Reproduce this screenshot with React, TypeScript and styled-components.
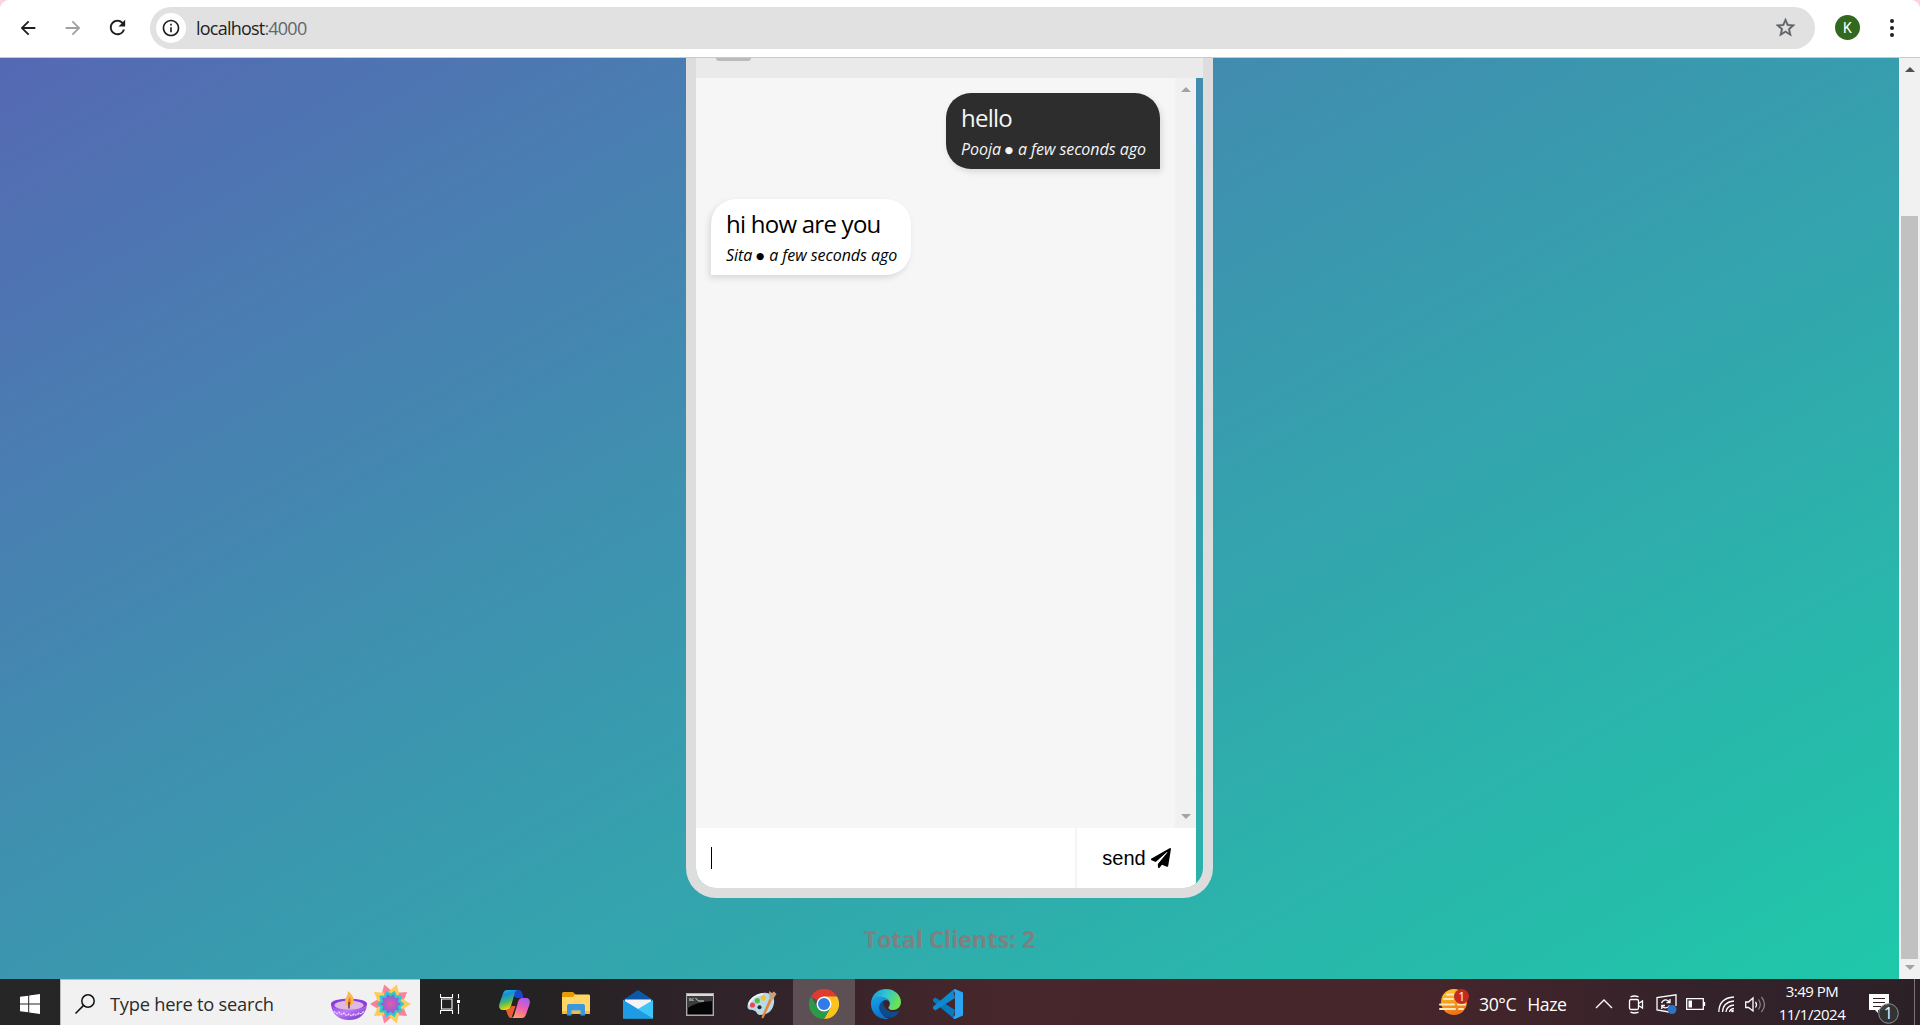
import React from "react";
import styled, { createGlobalStyle, css } from "styled-components";
import { MdArrowBack, MdArrowForward, MdRefresh, MdInfoOutline, MdStarBorder } from "react-icons/md";
import { FaPaperPlane } from "react-icons/fa";

const GlobalStyle = createGlobalStyle`
  * { box-sizing: border-box; }
  html, body { margin: 0; padding: 0; overflow: hidden; }
  body { font-family: "Open Sans", "Noto Sans", sans-serif; }
  svg { display: block; flex: none; }
`;

const ui = css`
  font-family: "Open Sans", "Noto Sans", sans-serif;
  white-space: nowrap;
`;

const Screen = styled.div`
  width: 1920px;
  height: 1025px;
  display: flex;
  flex-direction: column;
  overflow: hidden;
  background: #fbd3e0;
`;

/* Browser toolbar */
const Toolbar = styled.header`
  height: 58px;
  flex: none;
  display: flex;
  align-items: center;
  padding: 0 16px 2px 5px;
  background: #fff;
  border-bottom: 1px solid #c9cbca;
  border-radius: 9px 9px 0 0;
`;

const NavButton = styled.span<{ $dim?: boolean }>`
  width: 45px;
  height: 45px;
  display: flex;
  align-items: center;
  justify-content: center;
  color: ${(p) => (p.$dim ? "#a0a0a0" : "#1f1f1f")};
`;

const AddressBar = styled.div`
  width: 1665px;
  height: 42px;
  margin-left: 10px;
  padding: 0 18px 0 6px;
  display: flex;
  align-items: center;
  border-radius: 21px;
  background: #e1e1e1;
`;

const InfoBadge = styled.span`
  width: 30px;
  height: 30px;
  border-radius: 50%;
  background: #fff;
  display: flex;
  align-items: center;
  justify-content: center;
  color: #1f1f1f;
`;

const Url = styled.span`
  ${ui}
  flex: 1;
  margin-left: 10px;
  padding-top: 1px;
  font-size: 18px;
  letter-spacing: -0.78px;
  color: #1f1f1f;
  span { color: #63666a; }
`;

const Bookmark = styled(MdStarBorder)`
  color: #5f6368;
  path:not([fill="none"]) {
    stroke: #5f6368;
    stroke-width: 0.4px;
  }
`;

const Avatar = styled.span`
  width: 25px;
  height: 25px;
  margin-left: 20px;
  border-radius: 50%;
  background: #33691e;
  color: #fff;
  font: 14px Roboto, sans-serif;
  display: flex;
  align-items: center;
  justify-content: center;
`;

const MenuDots = styled.span`
  margin-left: 30px;
  width: 4px;
  display: flex;
  flex-direction: column;
  align-items: center;
  gap: 3px;
  i { width: 4px; height: 4px; border-radius: 50%; background: #1f1f1f; }
`;

/* Page */
const Viewport = styled.div`
  height: 921px;
  flex: none;
  display: flex;
  overflow: hidden;
`;

const Page = styled.main`
  width: 1899px;
  display: flex;
  flex-direction: column;
  align-items: center;
  background: linear-gradient(to bottom right, #5a60b4, #3c95af 49%, #1fc8a9) 0 100% / 1899px 1091px no-repeat;
`;

const Phone = styled.section`
  width: 527px;
  height: 840px;
  border: 10px solid #ddd;
  border-top: 0;
  border-radius: 0 0 30px 30px;
  overflow: hidden;
  display: flex;
  flex-direction: column;
`;

const ChatHeader = styled.div`
  height: 20px;
  padding-left: 20px;
  background: #eaeaea;
`;

const HeaderInputEdge = styled.div`
  width: 35px;
  height: 3px;
  border-radius: 0 0 4px 4px;
  background: #bbb;
`;

const ChatBody = styled.div`
  width: 500px;
  height: 750px;
  display: flex;
  background: #f6f6f6;
`;

const Messages = styled.div`
  flex: 1;
  padding: 15px;
  display: flex;
  flex-direction: column;
  gap: 30px;
`;

const Bubble = styled.article<{ $own?: boolean }>`
  align-self: ${(p) => (p.$own ? "flex-end" : "flex-start")};
  width: ${(p) => (p.$own ? 214 : 200)}px;
  height: 76px;
  padding: 6px 0 0 15px;
  color: ${(p) => (p.$own ? "#f5f5f5" : "#000")};
  background: ${(p) => (p.$own ? "#2d2d2d" : "#fff")};
  border-radius: ${(p) => (p.$own ? "25px 25px 0 25px" : "25px 25px 25px 0")};
  box-shadow: ${(p) => (p.$own ? 2 : -2)}px 3px 6px rgba(0, 0, 0, 0.12);
`;

const BubbleText = styled.p`
  ${ui}
  margin: 0;
  height: 38px;
  font-size: 24px;
  line-height: 37px;
  letter-spacing: -0.75px;
`;

const Meta = styled.p`
  ${ui}
  margin: 0;
  height: 24px;
  display: flex;
  align-items: center;
  font-size: 16px;
  font-style: italic;
  line-height: 24px;
  letter-spacing: -0.05px;
`;

const Dot = styled.span`
  width: 17px;
  padding-right: 1px;
  text-align: center;
  font: normal 9.5px/25px "DejaVu Sans", sans-serif;
`;

const ScrollTrack = styled.div<{ $bg: string }>`
  width: 21px;
  flex: none;
  display: flex;
  flex-direction: column;
  align-items: center;
  background: ${(p) => p.$bg};
`;

const Arrow = styled.span<{ $down?: boolean; $color: string }>`
  width: 0;
  height: 0;
  flex: none;
  margin: ${(p) => (p.$down ? "auto 0 9px" : "9px 0 0")};
  border: 5px solid transparent;
  ${(p) =>
    p.$down
      ? `border-top-color: ${p.$color}; border-bottom: 0;`
      : `border-bottom-color: ${p.$color}; border-top: 0;`}
`;

const Thumb = styled.div`
  width: 17px;
  height: 743px;
  margin-top: 144px;
  background: #c1c1c1;
`;

const Composer = styled.div`
  width: 500px;
  height: 60px;
  display: flex;
  background: #fff;
`;

const TextField = styled.div`
  width: 381px;
  display: flex;
  align-items: center;
  padding-left: 15px;
  border-right: 2px solid #f5f5f5;
`;

const Caret = styled.i`
  width: 1px;
  height: 22px;
  background: #000;
`;

const SendButton = styled.button`
  flex: 1;
  border: 0;
  padding: 0;
  background: none;
  color: #000;
  display: flex;
  align-items: center;
  justify-content: center;
  gap: 5px;
  font: 20px "Liberation Sans", Arial, sans-serif;
`;

const TotalClients = styled.h3`
  ${ui}
  margin: 24px 0 0;
  font-size: 23.4px;
  line-height: 34px;
  font-weight: 700;
  color: #808080;
`;

/* Taskbar */
const Taskbar = styled.footer`
  height: 46px;
  flex: none;
  display: flex;
  color: #fff;
  background: linear-gradient(90deg, #272626 0, #232223 500px, #33232a 780px, #47272b 1000px, #47262b 1400px, #34222a 1700px, #2c2027 1920px);
`;

const Slot = styled.span<{ $w: number; $active?: boolean; $top?: number }>`
  width: ${(p) => p.$w}px;
  height: 46px;
  flex: none;
  display: flex;
  align-items: center;
  justify-content: center;
  padding-top: ${(p) => p.$top ?? 4}px;
  background: ${(p) => (p.$active ? "#5d5054" : "transparent")};
`;

const Glyph = styled.span<{ $top: number }>`
  flex: none;
  margin-top: ${(p) => p.$top}px;
`;

const Search = styled.div`
  width: 360px;
  flex: none;
  display: flex;
  align-items: flex-start;
  padding: 0 8px 0 14px;
  background: #f1f1f1;
  border: 1px solid #bdbdbd;
  border-bottom: 0;
  border-right: 0;
`;

const SearchText = styled.span`
  ${ui}
  flex: 1;
  margin: 9px 0 0 15px;
  font-size: 18.3px;
  line-height: 30px;
  letter-spacing: -0.24px;
  color: #2b2b2b;
`;

const Festive = styled.span`
  display: flex;
  align-items: flex-start;
  gap: 3px;
  margin-right: 1px;
`;

const Weather = styled.div`
  ${ui}
  width: 138px;
  flex: none;
  margin-left: 460px;
  display: flex;
  gap: 9px;
  font-size: 17.7px;
  line-height: 50px;
  letter-spacing: -0.45px;
  span + span + span { margin-left: 2px; }
`;

const Tray = styled.div`
  display: flex;
  margin-left: 11px;
`;

const Clock = styled.div`
  ${ui}
  width: 84px;
  flex: none;
  padding-top: 1px;
  text-align: center;
  font-size: 15px;
  line-height: 23px;
  letter-spacing: -0.5px;
`;

const ShowDesktop = styled.span`
  width: 6px;
  margin-left: auto;
  border-left: 1px solid #7b7377;
`;

const Start = () => (
  <svg width="20" height="20" viewBox="0 0 20 20" fill="#fff">
    <path d="M0 2.8 8.2 1.7V9.5H0zM9.2 1.5 20 0V9.5H9.2zM0 10.5H8.2V18.3L0 17.2zM9.2 10.5H20V20L9.2 18.5z" />
  </svg>
);

const Lens = () => (
  <svg width="20" height="20" viewBox="0 0 20 20" fill="none" stroke="#111" strokeWidth="1.5">
    <circle cx="13" cy="7" r="6.2" />
    <path d="M8.6 11.4 .5 19.5" />
  </svg>
);

const Diya = () => (
  <svg width="36" height="30" viewBox="0 0 36 30">
    <defs>
      <linearGradient id="bowl" x2="1" y2="1">
        <stop stopColor="#8a3fe0" />
        <stop offset=".45" stopColor="#bb7cf5" />
        <stop offset="1" stopColor="#7023c4" />
      </linearGradient>
    </defs>
    <path d="M0 12C0 20 5 29 18 29S36 20 36 12Z" fill="url(#bowl)" />
    <ellipse cx="18" cy="13" rx="18" ry="5.500" fill="#8b3edb" />
    <ellipse cx="18" cy="14.300" rx="14.500" ry="4.500" fill="#ddb9e4" />
    <path d="M3 20q2.500 4 5 1 2.500 4 5 1 2.500 4 5 1 2.500 3 5 0 2.500 2 5-1 2.500 2 5-2" fill="none" stroke="#f1d8ff" strokeWidth="1.300" strokeDasharray="2 .8" />
    <path d="M17 0c5 4 7 9 5 12.500-2 3.500-7 3-8-.5C13 8 17 6 17 0Z" fill="#f8b84e" />
    <path d="M18.500 6c2 3 2 6 .5 8-2 0-3-3-.5-8Z" fill="#ef7c31" />
    <path d="M18 11v6.500" stroke="#6d3a35" strokeWidth="1.500" />
  </svg>
);

const star = (n: number, outer: number, inner: number) =>
  Array.from({ length: n * 2 }, (_, i) => {
    const a = (Math.PI * i) / n;
    const r = i % 2 ? inner : outer;
    return `${(20.5 + r * Math.cos(a)).toFixed(1)},${(20.5 + r * Math.sin(a)).toFixed(1)}`;
  }).join(" ");

const wedge = (i: number) => {
  const a = (Math.PI * i) / 5;
  const pt = (r: number, t: number) => `${20.5 + r * Math.cos(t)},${20.5 + r * Math.sin(t)}`;
  return `${pt(20.5, a)} ${pt(13, a + 0.42)} ${pt(6, a)} ${pt(13, a - 0.42)}`;
};

const Rangoli = () => (
  <svg width="41" height="42" viewBox="0 0 41 41">
    <defs>
      <radialGradient id="core">
        <stop stopColor="#e25bae" />
        <stop offset="1" stopColor="#8060db" />
      </radialGradient>
    </defs>
    {[1, 3, 5, 7, 9].map((i) => <polygon key={i} points={wedge(i)} fill={i === 5 ? "#f98097" : "#fb8397"} />)}
    {[0, 2, 4, 6, 8].map((i) => <polygon key={i} points={wedge(i)} fill="#ffcb5a" />)}
    <polygon points={star(10, 14, 10.5)} fill="#28cbd0" />
    <polygon points={star(10, 10.5, 7.5)} fill="url(#core)" />
  </svg>
);

const TaskView = () => (
  <svg width="20" height="20" viewBox="0 0 20 20" fill="none" stroke="#fff" strokeWidth="1.1">
    <path d="M.5 0V3.500H12.500V0M.5 20V16.500H12.500V20M1.500 5V15H12V5zM18.500 0V4.500M18.500 10V20" />
    <path d="M17 6H20V9H17z" fill="#fff" stroke="none" />
  </svg>
);

const Copilot = () => (
  <svg width="31" height="28" viewBox="0 0 31 28">
    <defs>
      <linearGradient id="cpA" x2=".3" y2="1">
        <stop stopColor="#20c4f4" /><stop offset=".3" stopColor="#168edb" /><stop offset=".65" stopColor="#49b768" /><stop offset="1" stopColor="#f5d500" />
      </linearGradient>
      <linearGradient id="cpB" x1=".7" x2=".3" y2="1">
        <stop stopColor="#a55cf0" /><stop offset=".5" stopColor="#ef5fb0" /><stop offset="1" stopColor="#ffa05c" />
      </linearGradient>
    </defs>
    <path d="M15 0h4.500c2 0 3 1 3.700 3l1.300 5h-6c-3 0-4-3-5.500-5z" fill="#1746d1" />
    <path d="M8.500 0H19c-2 0-3 2-3.500 4l-3.500 12c-.7 2.500-2 4-4.500 4H3.500C.5 20-.5 17 .5 13.500L4 3.500C4.800 1 6.300 0 8.500 0Z" fill="url(#cpA)" />
    <path d="M7 20c2.500 0 4.500-1 5.500-4h4l-4 12c-2 0-3-1-3.800-3.300z" fill="#ef5a36" />
    <path d="M22.500 28H12c2 0 3-2 3.500-4L19 12c.7-2.500 2-4 4.500-4h4c3 0 4 3 3 6.500L27 24.500c-.8 2.500-2.300 3.500-4.500 3.500Z" fill="url(#cpB)" />
  </svg>
);

const Folder = () => (
  <svg width="28" height="24" viewBox="0 0 28 24">
    <path d="M0 1.500Q0 0 1.500 0H11l2.500 2.500V6H0z" fill="#e39c08" />
    <path d="M13 2.500H27Q28 2.500 28 4V22H0V5h11z" fill="#ffd667" />
    <path d="M0 19H28V22H0z" fill="#f5bb3b" />
    <path d="M5 23.500V14Q5 12 7 12H21Q23 12 23 14V23.500H18.500V18.500H9.500V23.500z" fill="#3b97dc" />
  </svg>
);

const Mail = () => (
  <svg width="30" height="29" viewBox="0 0 30 29">
    <path d="M0 10 15 0 30 10V16H0z" fill="#0d58a6" />
    <path d="M2 9.500H28V18L15 26 2 18z" fill="#f5f3f7" />
    <path d="M0 10 15 19 0 28.500z" fill="#2fb2ec" />
    <path d="M30 10V28.500H0L15 19z" fill="#3fc5f7" />
    <path d="M0 10 30 28.500H0z" fill="#1e9be5" />
  </svg>
);

const Terminal = () => (
  <svg width="28" height="23" viewBox="0 0 28 23">
    <path d="M.7.7H27.300V22.300H.7z" fill="#050505" stroke="#a8abad" strokeWidth="1.400" />
    <path d="M1 1H27V3H1z" fill="#d9dcdd" />
    <path d="M1.500 3H26.500V8Q10 9 1.500 15z" fill="#3d3d3d" />
    <path d="M4 5V8M6 5.500V8M7.500 5.500v.5M7.500 7.500V8M9.500 5l3 3H18" fill="none" stroke="#ddd" strokeWidth="1" />
  </svg>
);

const Paint = () => (
  <svg width="30" height="29" viewBox="0 0 30 29">
    <path d="M16 3C24 2 28 7 27 13c-1 8-7 12-14 12-3 0-3-3-5-4-3-2-7 0-7.500-4C0 10 8 4 16 3Z" fill="#b9d9e9" />
    <path d="M16 4C9 5 3 9 2 15" fill="none" stroke="#e5f5fb" strokeWidth="2" />
    <circle cx="5.500" cy="15" r="2.600" fill="#e84a4f" />
    <circle cx="10.300" cy="10.700" r="2.600" fill="#5bb84e" />
    <circle cx="16.300" cy="8" r="2.700" fill="#f4c430" />
    <circle cx="12.500" cy="17.200" r="2" fill="#1f2a34" />
    <path d="M22.500 8.500 25 10 16.500 28Q14 29 15 26z" fill="#e08a38" />
    <path d="M22.500 8.500 22 1 25 3 27 1.500 29.500 4 25.500 10z" fill="#c7a27a" />
  </svg>
);

const Chrome = () => (
  <svg width="30" height="30" viewBox="0 0 30 30">
    <path d="M15 15 2 7.500A15 15 0 0 1 28 7.500Z" fill="#e03b30" />
    <path d="M15 7.500H28A15 15 0 0 1 15 30L21.500 18.750Z" fill="#fcc31e" />
    <path d="M2 7.500 8.500 18.750Q12 23 17 22.300L21.500 18.750 15 30A15 15 0 0 1 2 7.500Z" fill="#2b9a48" />
    <circle cx="15" cy="15" r="7.500" fill="#fff" />
    <circle cx="15" cy="15" r="6" fill="#2f7bea" />
  </svg>
);

const Edge = () => (
  <svg width="30" height="30" viewBox="0 0 30 30">
    <defs>
      <linearGradient id="edA" x2="1" y2=".4"><stop stopColor="#1593dc" /><stop offset=".5" stopColor="#2fc4d2" /><stop offset="1" stopColor="#6be255" /></linearGradient>
      <linearGradient id="edB" y2="1" x2=".4"><stop stopColor="#1aa4e4" /><stop offset="1" stopColor="#0a6fce" /></linearGradient>
    </defs>
    <path d="M0 14C1 5 7 0 15 0c9 0 15 6.500 15 13 0 5-4 8-8 8-3.500 0-5.500-1.500-4.500-3C21 13 17 9 12 9 6 8 1 11 0 14Z" fill="url(#edA)" />
    <path d="M0 15C0 10 4 7.500 9 7.500c6 0 10 4 10 7.500 0-2-2-4-4-4-4 0-7 5-6 9 1 5 5 9 9 9.500Q16 30 15 30C6 30 0 23 0 15Z" fill="url(#edB)" />
    <path d="M12 12C7 15 7 21 11 25s10 5 14 1.500Q28 24 28.500 21.700q-.5-.5-2 .5c-4 2-11 0-12.500-4Q12 15 12 12Z" fill="#114a8b" />
    <path d="M12.300 13C14 11 19 12 18.500 15.500q0 1-1 2.500c-.7 1 0 2 1.500 2.500-4 0-7-4-6.700-7.500Z" fill="#3a252b" />
  </svg>
);

const Code = () => (
  <svg width="30" height="30" viewBox="0 0 30 30">
    <path d="M2.300 8.500 0 10.300v2L20 29l2-8z" fill="#0878bf" />
    <path d="M2.300 21.500 0 19.700v-2L20 1l2 8z" fill="#0f89d2" />
    <path d="M22 0 30 3.500V26.500L22 30Q20.500 30 20 28.500L22 26V4L20 1.500Q21 0 22 0Z" fill="#2ba4f2" />
  </svg>
);

const Haze = () => (
  <svg width="31" height="27" viewBox="0 0 31 27">
    <defs>
      <linearGradient id="sun" y2="1" x2=".3"><stop stopColor="#ffd02b" /><stop offset="1" stopColor="#f17318" /></linearGradient>
    </defs>
    <circle cx="15" cy="13" r="13" fill="url(#sun)" />
    <path d="M8 5.500H15M5 10H14M1 15.500H15M19 15.500H26M1 20H16M20 20H24" stroke="#ffe8ba" strokeWidth="2" strokeLinecap="round" />
    <circle cx="22.500" cy="7.500" r="7.500" fill="#c42b20" />
    <text x="22.500" y="12" fill="#fff" fontSize="12" textAnchor="middle" fontFamily="Open Sans, sans-serif">1</text>
  </svg>
);

const line = { fill: "none", stroke: "#fff", strokeWidth: 1.3 };

const Chevron = () => <svg width="18" height="10" viewBox="0 0 18 10" {...line}><path d="M1 9 9 1 17 9" /></svg>;
const Camera = () => (
  <svg width="16" height="19" viewBox="0 0 16 19" {...line}>
    <rect x="1.500" y="4.500" width="9" height="10" rx="1.500" />
    <path d="M10.500 8.500 14.500 6V13L10.500 10.500M2.500 1.800Q6.500 .2 10.500 1.800M2.500 17.200Q6.500 18.800 10.500 17.200" />
  </svg>
);
const Sync = () => (
  <svg width="21" height="20" viewBox="0 0 21 20" {...line}>
    <path d="M13 18 1 16V3.500L20 .8V12M5.500 9Q7 5.500 10 5.800 12 6 13.500 8M14 5V8.500H10.500M13.500 11.500Q12 14 9 13.800 7 13.500 6 12M5.800 15V11.500H9" />
    <circle cx="16" cy="15.500" r="4.500" fill="#2c74c4" stroke="none" />
  </svg>
);
const Battery = () => (
  <svg width="20" height="12" viewBox="0 0 20 12" {...line}>
    <path d="M.7.7H17.300V11.300H.7zM18.500 4V8" /><path d="M2.500 2.500H6V9.500H2.500z" fill="#fff" stroke="none" />
  </svg>
);
const Wifi = () => (
  <svg width="17" height="17" viewBox="0 0 17 17" {...line}>
    <path d="M.8 16Q1 2 16 1M4.500 16Q5 6 16 5M8 16Q8.500 10 16 9M11.500 16Q12 13 16 12.500" />
    <circle cx="14.500" cy="15" r="1.300" fill="#fff" stroke="none" />
  </svg>
);
const Volume = () => (
  <svg width="21" height="17" viewBox="0 0 21 17" {...line}>
    <path d="M.7 6H3.500L8 2V15L3.500 11.500H.7zM10.500 6Q12.500 8.500 10.500 11.500" />
    <path d="M13.500 3.500Q17 8.500 13.500 13.500M16.500 1Q22.500 8.500 16.500 16" stroke="#8b7f84" />
  </svg>
);
const Notice = () => (
  <svg width="31" height="31" viewBox="0 0 31 31">
    <path d="M0 0H20V16H9V19L6 16H0z" fill="#fff" />
    <path d="M4 4.500H16M4 8.500H16M4 12.500H12" stroke="#2d2027" strokeWidth="1.200" />
    <circle cx="19.500" cy="19.500" r="9.800" fill="#353535" fillOpacity=".93" stroke="#929292" strokeWidth="1" />
    <text x="19.500" y="25" fill="#fff" fontSize="15.500" textAnchor="middle" fontFamily="Open Sans, sans-serif">1</text>
  </svg>
);

const messages = [
  { text: "hello", author: "Pooja", own: true },
  { text: "hi how are you", author: "Sita", own: false },
];

const apps = [Copilot, Folder, Mail, Terminal, Paint, Chrome, Edge, Code];

export default function App() {
  return (
    <Screen>
      <GlobalStyle />
      <Toolbar>
        <NavButton><MdArrowBack size={22} /></NavButton>
        <NavButton $dim><MdArrowForward size={22} /></NavButton>
        <NavButton><MdRefresh size={23} /></NavButton>
        <AddressBar>
          <InfoBadge><MdInfoOutline size={20} /></InfoBadge>
          <Url>localhost<span>:4000</span></Url>
          <Bookmark size={23} />
        </AddressBar>
        <Avatar>K</Avatar>
        <MenuDots><i /><i /><i /></MenuDots>
      </Toolbar>

      <Viewport>
        <Page>
          <Phone>
            <ChatHeader><HeaderInputEdge /></ChatHeader>
            <ChatBody>
              <Messages>
                {messages.map((m) => (
                  <Bubble key={m.author} $own={m.own}>
                    <BubbleText>{m.text}</BubbleText>
                    <Meta>{m.author}<Dot>●</Dot>a few seconds ago</Meta>
                  </Bubble>
                ))}
              </Messages>
              <ScrollTrack $bg="#f1f1f1">
                <Arrow $color="#a3a3a3" />
                <Arrow $down $color="#a3a3a3" />
              </ScrollTrack>
            </ChatBody>
            <Composer>
              <TextField><Caret /></TextField>
              <SendButton>send<FaPaperPlane size={20} /></SendButton>
            </Composer>
          </Phone>
          <TotalClients>Total Clients: 2</TotalClients>
        </Page>
        <ScrollTrack $bg="#f1f1f1">
          <Arrow $color="#505050" />
          <Thumb />
          <Arrow $down $color="#a3a3a3" />
        </ScrollTrack>
      </Viewport>

      <Taskbar>
        <Slot $w={60} $top={3}><Start /></Slot>
        <Search>
          <Glyph $top={14}><Lens /></Glyph>
          <SearchText>Type here to search</SearchText>
          <Festive>
            <Glyph $top={11}><Diya /></Glyph>
            <Glyph $top={3}><Rangoli /></Glyph>
          </Festive>
        </Search>
        <Slot $w={60} $top={3}><TaskView /></Slot>
        <Slot $w={3} />
        {apps.map((Icon, i) => (
          <Slot key={i} $w={62} $active={Icon === Chrome}><Icon /></Slot>
        ))}
        <Weather><Glyph $top={10}><Haze /></Glyph><span>30°C</span><span>Haze</span></Weather>
        <Tray>
          <Slot $w={32}><Chevron /></Slot>
          <Slot $w={32}><Camera /></Slot>
          <Slot $w={28}><Sync /></Slot>
          <Slot $w={32}><Battery /></Slot>
          <Slot $w={28}><Wifi /></Slot>
          <Slot $w={30}><Volume /></Slot>
        </Tray>
        <Clock>3:49 PM<br />11/1/2024</Clock>
        <Slot $w={60} $top={15}><Notice /></Slot>
        <ShowDesktop />
      </Taskbar>
    </Screen>
  );
}
